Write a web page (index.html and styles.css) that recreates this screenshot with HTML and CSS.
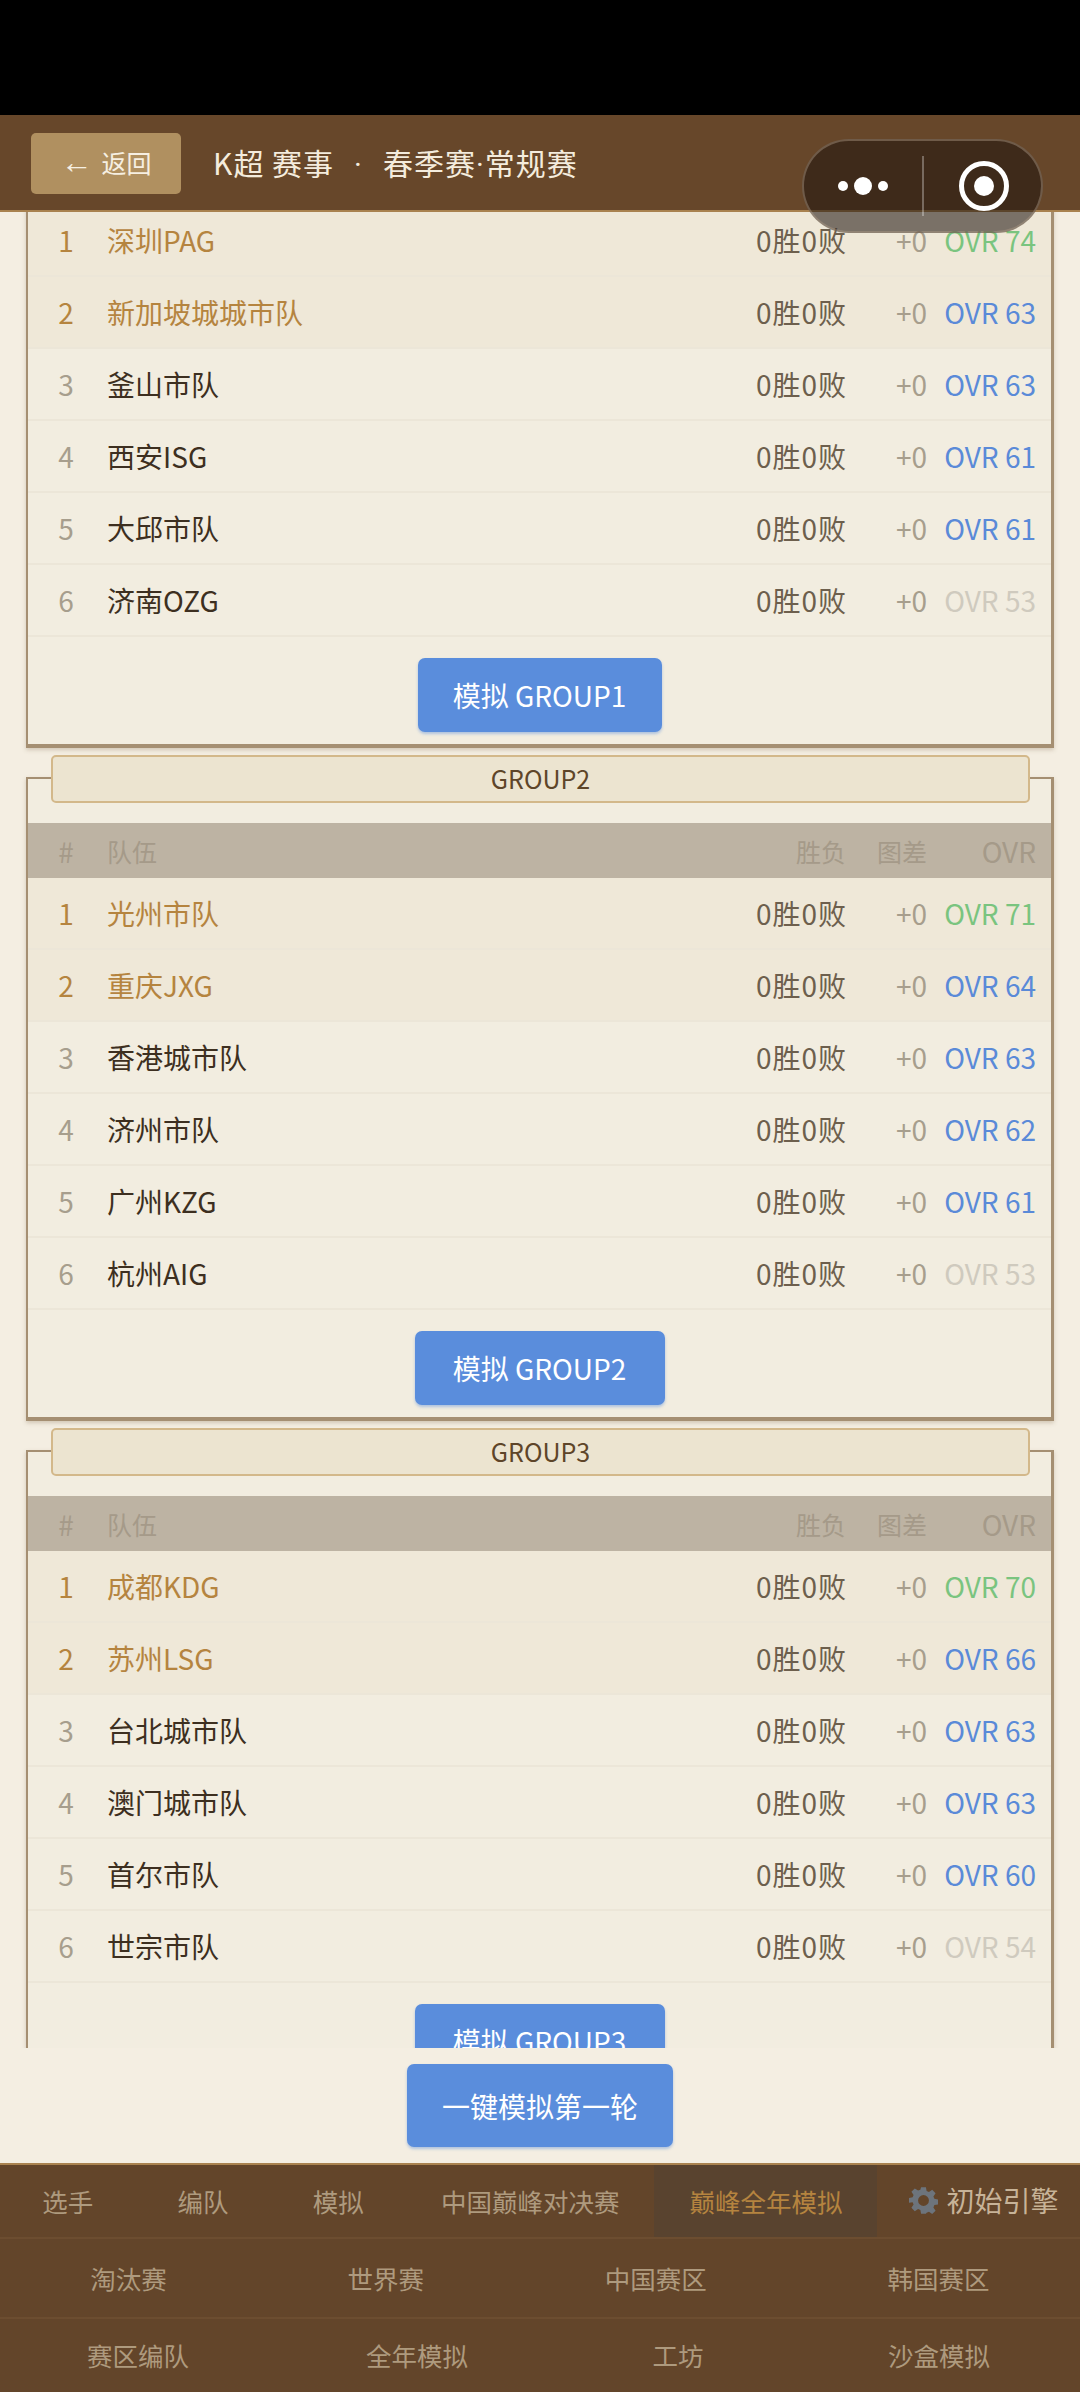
FILE: index.html
```html
<!DOCTYPE html>
<html lang="zh-CN">
<head>
    <meta charset="UTF-8">
    <title>K超 赛事</title>
    <link rel="stylesheet" href="styles.css">
</head>
<body>
<div class="app">
    <div class="status-bar"></div>

    <header class="top-bar">
        <button class="back-btn"><span class="arrow">←</span>返回</button>
        <div class="top-title">K超 赛事<span class="sep">·</span>春季赛<span class="dot">·</span>常规赛</div>
    </header>

    <div class="capsule">
        <div class="capsule-dots"><i></i><i class="big"></i><i></i></div>
        <div class="capsule-line"></div>
        <div class="capsule-target"><i></i></div>
    </div>

    <main class="content">
        <div class="groups">
            <section class="group group-first">
                <div class="row top"><span class="rank">1</span><span class="name">深圳PAG</span><span class="wdl">0胜0败</span><span class="diff">+0</span><span class="ovr green">OVR 74</span></div>
                <div class="row top"><span class="rank">2</span><span class="name">新加坡城城市队</span><span class="wdl">0胜0败</span><span class="diff">+0</span><span class="ovr blue">OVR 63</span></div>
                <div class="row"><span class="rank">3</span><span class="name">釜山市队</span><span class="wdl">0胜0败</span><span class="diff">+0</span><span class="ovr blue">OVR 63</span></div>
                <div class="row"><span class="rank">4</span><span class="name">西安ISG</span><span class="wdl">0胜0败</span><span class="diff">+0</span><span class="ovr blue">OVR 61</span></div>
                <div class="row"><span class="rank">5</span><span class="name">大邱市队</span><span class="wdl">0胜0败</span><span class="diff">+0</span><span class="ovr blue">OVR 61</span></div>
                <div class="row"><span class="rank">6</span><span class="name">济南OZG</span><span class="wdl">0胜0败</span><span class="diff">+0</span><span class="ovr grey">OVR 53</span></div>
                <div class="group-foot"><button class="sim-btn">模拟 GROUP1</button></div>
            </section>

            <section class="group">
                <div class="group-title">GROUP2</div>
                <div class="row head"><span class="rank">#</span><span class="name">队伍</span><span class="wdl">胜负</span><span class="diff">图差</span><span class="ovr">OVR</span></div>
                <div class="row top"><span class="rank">1</span><span class="name">光州市队</span><span class="wdl">0胜0败</span><span class="diff">+0</span><span class="ovr green">OVR 71</span></div>
                <div class="row top"><span class="rank">2</span><span class="name">重庆JXG</span><span class="wdl">0胜0败</span><span class="diff">+0</span><span class="ovr blue">OVR 64</span></div>
                <div class="row"><span class="rank">3</span><span class="name">香港城市队</span><span class="wdl">0胜0败</span><span class="diff">+0</span><span class="ovr blue">OVR 63</span></div>
                <div class="row"><span class="rank">4</span><span class="name">济州市队</span><span class="wdl">0胜0败</span><span class="diff">+0</span><span class="ovr blue">OVR 62</span></div>
                <div class="row"><span class="rank">5</span><span class="name">广州KZG</span><span class="wdl">0胜0败</span><span class="diff">+0</span><span class="ovr blue">OVR 61</span></div>
                <div class="row"><span class="rank">6</span><span class="name">杭州AIG</span><span class="wdl">0胜0败</span><span class="diff">+0</span><span class="ovr grey">OVR 53</span></div>
                <div class="group-foot"><button class="sim-btn wide">模拟 GROUP2</button></div>
            </section>

            <section class="group">
                <div class="group-title">GROUP3</div>
                <div class="row head"><span class="rank">#</span><span class="name">队伍</span><span class="wdl">胜负</span><span class="diff">图差</span><span class="ovr">OVR</span></div>
                <div class="row top"><span class="rank">1</span><span class="name">成都KDG</span><span class="wdl">0胜0败</span><span class="diff">+0</span><span class="ovr green">OVR 70</span></div>
                <div class="row top"><span class="rank">2</span><span class="name">苏州LSG</span><span class="wdl">0胜0败</span><span class="diff">+0</span><span class="ovr blue">OVR 66</span></div>
                <div class="row"><span class="rank">3</span><span class="name">台北城市队</span><span class="wdl">0胜0败</span><span class="diff">+0</span><span class="ovr blue">OVR 63</span></div>
                <div class="row"><span class="rank">4</span><span class="name">澳门城市队</span><span class="wdl">0胜0败</span><span class="diff">+0</span><span class="ovr blue">OVR 63</span></div>
                <div class="row"><span class="rank">5</span><span class="name">首尔市队</span><span class="wdl">0胜0败</span><span class="diff">+0</span><span class="ovr blue">OVR 60</span></div>
                <div class="row"><span class="rank">6</span><span class="name">世宗市队</span><span class="wdl">0胜0败</span><span class="diff">+0</span><span class="ovr grey">OVR 54</span></div>
                <div class="group-foot"><button class="sim-btn wide">模拟 GROUP3</button></div>
            </section>
        </div>
    </main>

    <div class="action-bar"><button class="round-btn">一键模拟第一轮</button></div>

    <nav class="bottom-nav">
        <div class="nav-row tabs">
            <a class="tab">选手</a>
            <a class="tab">编队</a>
            <a class="tab">模拟</a>
            <a class="tab wide">中国巅峰对决赛</a>
            <a class="tab wide active">巅峰全年模拟</a>
            <a class="tab wide engine">
                <svg class="gear" viewBox="0 0 24 24"><path fill-rule="evenodd" d="M10 1h4l.6 3.200 1.900.8 2.700-1.800 2.800 2.800-1.800 2.700.8 1.900 3.200.6v4l-3.200.6-.8 1.900 1.800 2.700-2.800 2.800-2.700-1.800-1.900.8L14 23h-4l-.6-3.200-1.900-.8-2.700 1.800-2.800-2.800 1.800-2.700-.8-1.900L-.2 14v-4L3 9.400l.8-1.900L2 4.800 4.800 2l2.700 1.800 1.900-.8zM12 7.500a4.500 4.500 0 1 0 0 9 4.500 4.500 0 0 0 0-9z"/></svg>
                <span>初始引擎</span>
            </a>
        </div>
        <div class="nav-row links">
            <a>淘汰赛</a><a>世界赛</a><a>中国赛区</a><a>韩国赛区</a>
        </div>
        <div class="nav-row links row-three">
            <a>赛区编队</a><a>全年模拟</a><a>工坊</a><a>沙盒模拟</a>
        </div>
    </nav>
</div>
</body>
</html>
```

FILE: styles.css
```css
* {
    box-sizing: border-box;
}

body {
    margin: 0;
    background-color: #f4eee2;
    font-family: "Noto Sans CJK SC", "Noto Sans", sans-serif;
}

button {
    font-family: inherit;
    border: none;
}

.app {
    position: relative;
    width: 1080px;
    height: 2392px;
    overflow: hidden;
    display: flex;
    flex-direction: column;
}

.status-bar {
    height: 115px;
    flex: none;
    background-color: #000;
}

.top-bar {
    height: 97px;
    flex: none;
    display: flex;
    align-items: center;
    padding: 2px 31px 0;
    background-color: #67472a;
    border-bottom: 2px solid #a9824f;
    position: relative;
    z-index: 2;
}

.back-btn {
    width: 150px;
    height: 61px;
    padding: 0 0 4px;
    display: flex;
    align-items: center;
    justify-content: center;
    background-color: #b09060;
    color: #f6efe2;
    font-size: 25px;
    border-radius: 5px;
}

.arrow {
    margin-right: 9px;
    font-family: "Liberation Sans", sans-serif;
    font-size: 32px;
    line-height: 1;
}

.top-title {
    margin: 0 0 4px 32px;
    color: #f4ecdd;
    font-size: 30px;
    letter-spacing: 1px;
}

.sep {
    margin: 0 20px;
    font-family: "Roboto", sans-serif;
}

.dot {
    font-family: "Roboto", sans-serif;
}

.capsule {
    position: absolute;
    left: 802px;
    top: 139px;
    width: 241px;
    height: 94px;
    display: flex;
    align-items: center;
    border-radius: 47px;
    background-color: rgba(30, 20, 15, 0.56);
    border: 2px solid rgba(170, 150, 130, 0.45);
    z-index: 3;
}

.capsule-dots {
    width: 118px;
    display: flex;
    justify-content: center;
    align-items: center;
    gap: 6px;
}

.capsule-dots i {
    width: 10px;
    height: 10px;
    border-radius: 50%;
    background-color: #fff;
}

.capsule-dots i.big {
    width: 18px;
    height: 18px;
}

.capsule-line {
    width: 2px;
    height: 60px;
    background-color: rgba(255, 255, 255, 0.3);
}

.capsule-target {
    width: 50px;
    height: 50px;
    margin-left: 35px;
    display: flex;
    align-items: center;
    justify-content: center;
    border: 5px solid #fff;
    border-radius: 50%;
}

.capsule-target i {
    width: 20px;
    height: 20px;
    border-radius: 50%;
    background-color: #fff;
}

.content {
    height: 1836px;
    flex: none;
    overflow: hidden;
}

.groups {
    margin-top: -7px;
    padding: 0 26px;
    display: flex;
    flex-direction: column;
    gap: 29px;
}

.group {
    background-color: #f2ede0;
    border: 2px solid #a58f72;
    border-right-width: 3px;
    border-bottom-width: 4px;
    box-shadow: 0 2px 4px rgba(110, 85, 50, 0.25);
}

.group-first {
    border-top: none;
}

.group-title {
    height: 48px;
    margin: -24px 21px 20px 23px;
    padding-bottom: 2px;
    display: flex;
    align-items: center;
    justify-content: center;
    font-size: 25px;
    color: #5e4529;
    background-color: #ece4d0;
    border: 2px solid #d3b88a;
    border-radius: 5px;
    position: relative;
}

.row {
    height: 72px;
    display: flex;
    align-items: center;
    padding-right: 15px;
    font-size: 28px;
    color: #3d2f20;
    border-bottom: 2px solid #ece6d8;
}

.row.top {
    background-color: #efe8d8;
    color: #b5843f;
}

.row.head {
    height: 55px;
    font-size: 25px;
    background-color: #bdb3a3;
    color: #a59a89;
    border-bottom: none;
}

.rank {
    width: 79px;
    padding-right: 3px;
    font-size: 28px;
    text-align: center;
    color: #a79e8d;
}

.top .rank {
    color: #b5843f;
}

.head .rank,
.head .wdl,
.head .diff {
    color: #a59a89;
}

.head .ovr {
    font-size: 28px;
}

.name {
    flex: 1;
}

.wdl {
    margin-right: -1px;
    letter-spacing: 1px;
    color: #6d5f4d;
}

.head .wdl {
    letter-spacing: 0;
    margin-right: 0;
}

.diff {
    width: 81px;
    text-align: right;
    color: #a79e8d;
}

.ovr {
    width: 109px;
    text-align: right;
    white-space: nowrap;
}

.ovr.green {
    color: #7ac47f;
}

.ovr.blue {
    color: #5a8ad8;
}

.ovr.grey {
    color: #cfcabe;
}

.group-foot {
    height: 107px;
    padding-top: 21px;
    text-align: center;
}

.sim-btn,
.round-btn {
    background-color: #5a8ddc;
    color: #fff;
    border-radius: 7px;
    box-shadow: 0 2px 3px rgba(90, 141, 220, 0.45);
}

.sim-btn {
    width: 244px;
    height: 74px;
    padding: 0;
    font-size: 28px;
}

.sim-btn.wide {
    width: 250px;
}

.action-bar {
    height: 115px;
    flex: none;
    padding-top: 16px;
    text-align: center;
}

.round-btn {
    width: 266px;
    height: 83px;
    font-size: 28px;
}

.bottom-nav {
    flex: 1;
    background-color: #63452a;
    border-top: 2px solid #a9824f;
    color: #ae9a7e;
    font-size: 25.500px;
}

.nav-row {
    display: flex;
    align-items: center;
    padding-bottom: 2px;
    white-space: nowrap;
}

.tabs {
    height: 74px;
    padding-bottom: 0;
    align-items: stretch;
    border-bottom: 2px solid #6c4d30;
}

.tab {
    width: 135.300px;
    flex: none;
    display: flex;
    align-items: center;
    justify-content: center;
    padding-bottom: 2px;
}

.tab.wide {
    width: auto;
    padding: 0 35px 2px;
}

.tab.active {
    background-color: #59432f;
    color: #b5843f;
}

.tab.engine {
    padding: 0 0 2px 32px;
    gap: 8px;
    color: #c7b398;
    font-size: 28px;
}

.gear {
    width: 29px;
    height: 29px;
    fill: #6d747c;
}

.links {
    height: 80px;
    border-bottom: 2px solid #6c4d30;
}

.links a {
    flex: 1 1 auto;
    text-align: center;
}

.row-three {
    display: grid;
    grid-template-columns: 276px 282px 240px 282px;
    height: 73px;
    border-bottom: none;
}
```
